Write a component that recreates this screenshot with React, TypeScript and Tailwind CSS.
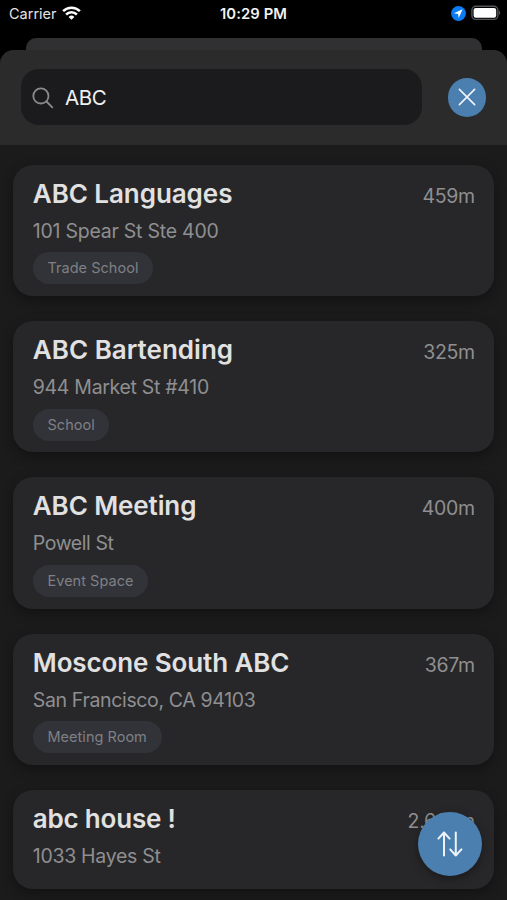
type Place = { name: string; address: string; distance: string; tag?: string; nameTracking: string; addressTracking: string };

const places: Place[] = [
  { name: 'ABC Languages', address: '101 Spear St Ste 400', distance: '459m', tag: 'Trade School', nameTracking: 'tracking-[-0.06px]', addressTracking: 'tracking-[-0.24px]' },
  { name: 'ABC Bartending', address: '944 Market St #410', distance: '325m', tag: 'School', nameTracking: 'tracking-[0.02px]', addressTracking: 'tracking-[-0.31px]' },
  { name: 'ABC Meeting', address: 'Powell St', distance: '400m', tag: 'Event Space', nameTracking: 'tracking-[-0.1px]', addressTracking: 'tracking-[-0.42px]' },
  { name: 'Moscone South ABC', address: 'San Francisco, CA 94103', distance: '367m', tag: 'Meeting Room', nameTracking: 'tracking-[-0.12px]', addressTracking: 'tracking-[-0.35px]' },
  { name: 'abc house !', address: '1033 Hayes St', distance: '2.60km', nameTracking: 'tracking-[-0.2px]', addressTracking: 'tracking-[-0.3px]' },
];

function StatusBar() {
  return (
    <div className="grid h-[38px] grid-cols-3 pt-[4px] text-[14.5px] leading-[20px] text-[#e4e4e4]">
      <div className="flex pl-[9px]">
        <span>Carrier</span>
        <svg className="mt-[2px] ml-[5px] h-[14px] w-[19px]" viewBox="0 0 19 14" fill="none" stroke="#fff" strokeWidth="2.5">
          <path d="M1.1 5.2a12 12 0 0 1 16.8 0" />
          <path d="M4.1 8.5a7.7 7.7 0 0 1 10.8 0" />
          <path d="M9.5 13.8 6.6 10.9a4.1 4.1 0 0 1 5.8 0z" fill="#fff" stroke="none" />
        </svg>
      </div>
      <span className="text-center text-[14.8px] font-semibold tracking-[0.1px] text-[#f2f2f2]">10:29 PM</span>
      <div className="flex justify-end pr-[6px]">
        <svg className="mt-[2px] h-[15px] w-[15px]" viewBox="0 0 15 15">
          <circle cx="7.5" cy="7.5" r="7.4" fill="#0a7cf5" />
          <path d="M11.6 3.3 2.9 7.3l4.2.7.6 4z" fill="#fff" />
        </svg>
        <svg className="mt-[1px] ml-[5px] h-[16px] w-[30px]" viewBox="0 0 30 16">
          <rect x=".9" y="1.2" width="26" height="13.2" rx="4" fill="none" stroke="#55565a" strokeWidth="1.4" />
          <rect x="2.6" y="2.9" width="22.6" height="9.8" rx="2.2" fill="#fff" />
          <path d="M28.2 5.5q2 2.3 0 4.6z" fill="#66676a" />
        </svg>
      </div>
    </div>
  );
}

function PlaceCard({ place }: { place: Place }) {
  return (
    <article className={`flex shrink-0 flex-col items-start rounded-[20px] bg-[#272729] px-[19.5px] pt-[12px] shadow-[0_4px_12px_rgba(0,0,0,0.35)] ${place.tag ? 'h-[131.3px]' : 'h-[99px]'}`}>
      <div className="flex w-full items-start justify-between">
        <h2 className={`text-[26px] leading-[34px] font-semibold text-[#e1e1e2] ${place.nameTracking}`}>{place.name}</h2>
        <span className="-mr-[0.5px] pt-[5px] text-[19.5px] leading-[28px] tracking-[-0.35px] text-[#8f8f91]">{place.distance}</span>
      </div>
      <p className={`mt-[6px] text-[19.5px] leading-[28px] text-[#8f8f91] ${place.addressTracking}`}>{place.address}</p>
      {place.tag && (
        <span className="mt-[7.5px] flex h-[32px] items-center rounded-full bg-[#323338] px-[14.7px] text-[14.5px] tracking-[0.03px] text-[#7f8085]">{place.tag}</span>
      )}
    </article>
  );
}

export default function App() {
  return (
    <main className="relative flex h-[900px] w-[507px] flex-col overflow-hidden bg-black font-['Inter','Liberation_Sans',sans-serif]">
      <StatusBar />
      <div className="mx-[25.5px] h-[12px] shrink-0 rounded-t-[10px] bg-[#303032]" />
      <section className="flex min-h-0 flex-1 flex-col overflow-hidden rounded-t-[14px] bg-[#1b1b1c]">
        <header className="flex h-[95px] shrink-0 items-start justify-between bg-[#2b2b2b] pt-[19px] pr-[21px] pl-[21px]">
          <div className="flex h-[56px] w-[401px] items-center rounded-[18px] bg-[#1b1b1d] pt-[2px] pl-[11px]">
            <svg className="h-[22px] w-[22px]" viewBox="0 0 22 22" fill="none" stroke="#8a8a8c" strokeWidth="1.8" strokeLinecap="round">
              <circle cx="8.9" cy="8.9" r="7.6" />
              <path d="m14.5 14.5 5.8 5.8" />
            </svg>
            <span className="ml-[11px] text-[20.5px] tracking-[-0.4px] text-[#f1f1f1]">ABC</span>
          </div>
          <button className="mt-[9px] flex h-[38.5px] w-[38.5px] items-center justify-center rounded-full bg-[#4a7fb0]">
            <svg className="h-[18px] w-[18px]" viewBox="0 0 18 18" stroke="#edf3f9" strokeWidth="1.7" strokeLinecap="round">
              <path d="m1.4 1.4 15.2 15.2m0-15.2L1.4 16.6" />
            </svg>
          </button>
        </header>
        <div className="flex flex-1 flex-col gap-[25.1px] px-[13.3px] pt-[19.65px]">
          {places.map((place) => <PlaceCard key={place.name} place={place} />)}
        </div>
      </section>
      <button className="absolute top-[812px] left-[418.4px] flex h-[64px] w-[64px] items-center justify-center rounded-full bg-[#4a7fb0] shadow-[0_3px_10px_rgba(0,0,0,0.35)]">
        <svg className="h-[26px] w-[26px]" viewBox="0 0 26 26" fill="none" stroke="#edf3f9" strokeWidth="2" strokeLinecap="round" strokeLinejoin="round">
          <path d="M7 24.5V1.5M1.4 7.6 7 1.5l5.6 6.1" />
          <path d="M18.8 1.5v23M13.2 18.4l5.6 6.1 5.6-6.1" />
        </svg>
      </button>
    </main>
  );
}
